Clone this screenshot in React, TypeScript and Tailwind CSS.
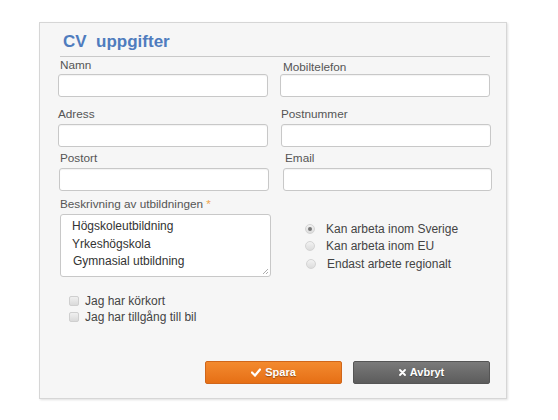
import React from "react";

const font = { fontFamily: '"Liberation Sans", Arial, sans-serif' };

function Label({ children, className = "" }: { children: React.ReactNode; className?: string }) {
  return <div className={`text-[11.75px] leading-[14px] text-[#555] ${className}`}>{children}</div>;
}

function Input({ className = "" }: { className?: string }) {
  return (
    <div
      className={`h-[23px] rounded-[3px] border border-[#c8c8c8] bg-white shadow-[inset_0_1px_1px_rgba(0,0,0,0.05)] ${className}`}
    />
  );
}

function Radio({ checked, label }: { checked?: boolean; label: string }) {
  return (
    <div className="flex h-[17.5px] items-center">
      <span className="flex h-[10px] w-[10px] items-center justify-center rounded-full border border-[#d4d4d4] bg-gradient-to-b from-[#f2f2f2] to-[#dcdcdc]">
        {checked && <span className="h-[4px] w-[4px] rounded-full bg-[#777]" />}
      </span>
      <span className="ml-[11px] text-[12px] text-[#444]">{label}</span>
    </div>
  );
}

function Check({ label }: { label: string }) {
  return (
    <div className="flex h-[16px] items-center">
      <span className="h-[10px] w-[10px] rounded-[2px] border border-[#cfcfcf] bg-gradient-to-b from-[#f0f0f0] to-[#dadada]" />
      <span className="ml-[6px] text-[12px] text-[#444]">{label}</span>
    </div>
  );
}

export default function App() {
  return (
    <div className="h-[420px] w-[558px] bg-white pl-[39px] pt-[22px]" style={font}>
      <div className="h-[377px] w-[468px] border border-[#d6d6d6] bg-[#f6f6f6] pl-[18px] pr-[16px] shadow-[1px_1px_2px_rgba(0,0,0,0.12)]">
        <div className="ml-[2px] border-b border-[#c9c9c9] pb-[4px] pl-[3px] pt-[9px] text-[17px] font-bold leading-[20px] text-[#4f7cbe]">
          CV&nbsp; uppgifter
        </div>

        <div className="grid grid-cols-[211px_211px] gap-x-[11px]">
          {/* row 1 */}
          <div>
            <Label className="ml-[2px] mt-[1px]">Namn</Label>
            <Input className="mt-[2px] w-[210px]" />
          </div>
          <div>
            <Label className="ml-[3px] mt-[3px]">Mobiltelefon</Label>
            <Input className="mt-[0px] w-[210px]" />
          </div>

          {/* row 2 */}
          <div>
            <Label className="mt-[10px]">Adress</Label>
            <Input className="mt-[3px] w-[210px]" />
          </div>
          <div>
            <Label className="ml-[1px] mt-[10px]">Postnummer</Label>
            <Input className="ml-[1px] mt-[3px] w-[210px]" />
          </div>

          {/* row 3 */}
          <div>
            <Label className="ml-[2px] mt-[4px]">Postort</Label>
            <Input className="ml-[1px] mt-[3px] w-[210px]" />
          </div>
          <div>
            <Label className="ml-[5px] mt-[4px]">Email</Label>
            <Input className="ml-[3px] mt-[3px] w-[209px]" />
          </div>

          {/* row 4 */}
          <div>
            <Label className="ml-[2px] mt-[6px]">
              Beskrivning av utbildningen <span className="text-[#f0a54a]">*</span>
            </Label>
            <div className="relative ml-[2px] mt-[3px] h-[63px] w-[211px] rounded-[3px] border border-[#c8c8c8] bg-white pl-[11px] pt-[3px] text-[12px] leading-[17.5px] text-[#333]">
              <div>Högskoleutbildning</div>
              <div>Yrkeshögskola</div>
              <div className="pl-[1px]">Gymnasial utbildning</div>
              <svg className="absolute bottom-[1px] right-[1px]" width="7" height="7" viewBox="0 0 7 7">
                <path d="M1 6 L6 1 M4 6 L6 4" stroke="#999" strokeWidth="0.8" />
              </svg>
            </div>
          </div>
          <div className="pl-[25px] pt-[29px]">
            <Radio checked label="Kan arbeta inom Sverige" />
            <Radio label="Kan arbeta inom EU" />
            <div className="ml-[1px]">
              <Radio label="Endast arbete regionalt" />
            </div>
          </div>
        </div>

        <div className="ml-[11px] mt-[16px]">
          <Check label="Jag har körkort" />
          <Check label="Jag har tillgång till bil" />
        </div>

        <div className="mt-[36px] flex justify-end gap-[11px]">
          <button className="flex h-[23px] w-[137px] items-center justify-center gap-[4px] rounded-[2px] border border-[#d0661a] bg-gradient-to-b from-[#f38a2e] to-[#e66f14] text-[11px] font-bold text-white [text-shadow:0_1px_1px_rgba(0,0,0,0.35)]">
            <svg width="10" height="9" viewBox="0 0 10 9">
              <path d="M1 4.5 L4 7.5 L9 1.5" stroke="white" strokeWidth="2.2" fill="none" strokeLinecap="round" />
            </svg>
            Spara
          </button>
          <button className="flex h-[23px] w-[137px] items-center justify-center gap-[4px] rounded-[2px] border border-[#555] bg-gradient-to-b from-[#7a7a7a] to-[#5c5c5c] text-[11px] font-bold text-white [text-shadow:0_1px_1px_rgba(0,0,0,0.35)]">
            <svg width="7" height="7" viewBox="0 0 7 7">
              <path d="M1 1 L6 6 M6 1 L1 6" stroke="white" strokeWidth="1.8" strokeLinecap="round" />
            </svg>
            Avbryt
          </button>
        </div>
      </div>
    </div>
  );
}
